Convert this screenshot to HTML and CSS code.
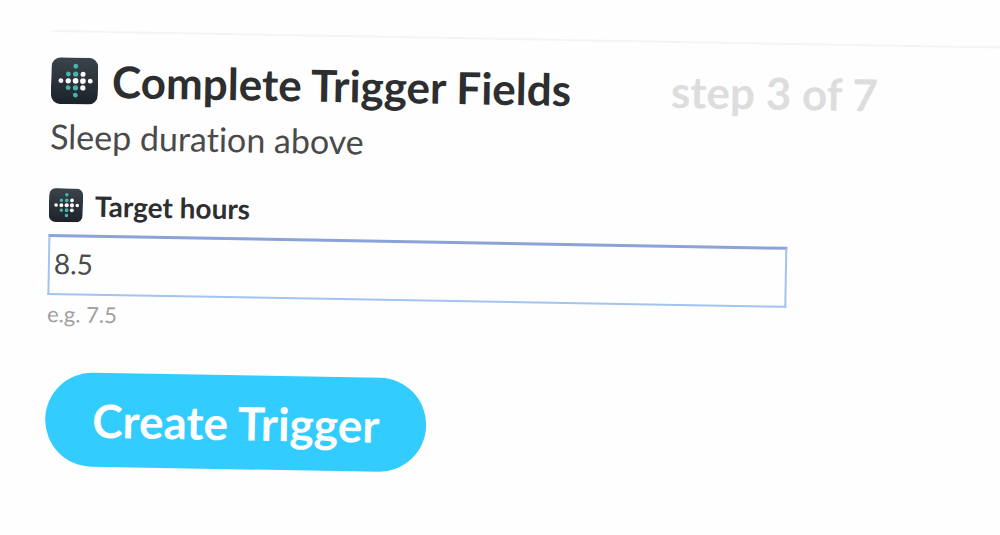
FILE: index.html
```html
<!DOCTYPE html>
<html lang="en">
<head>
    <meta charset="UTF-8">
    <meta name="viewport" content="width=device-width, initial-scale=1.0">
    <title>Complete Trigger Fields</title>
    <link rel="stylesheet" href="styles.css">
</head>
<body>
    <!-- Tracker logo, shared by the heading and the field label -->
    <svg class="sprite" aria-hidden="true">
        <defs>
            <linearGradient id="tile" x1="0" y1="0" x2="0" y2="1">
                <stop offset="0" stop-color="#3b434b"/>
                <stop offset="1" stop-color="#1c2229"/>
            </linearGradient>
        </defs>
        <symbol id="logo" viewBox="0 0 48 48">
            <rect width="48" height="48" rx="10" fill="url(#tile)"/>
            <g fill="#45b5aa">
                <circle cx="25" cy="9" r="2.5"/>
                <circle cx="17.5" cy="17" r="2.5"/>
                <circle cx="25" cy="17" r="2.7"/>
                <circle cx="17.5" cy="31" r="2.5"/>
                <circle cx="25" cy="31" r="2.7"/>
                <circle cx="25" cy="38.5" r="2.5"/>
            </g>
            <g fill="#fff">
                <circle cx="32.5" cy="17" r="2.6"/>
                <circle cx="10" cy="24" r="2.5"/>
                <circle cx="17.5" cy="24" r="2.7"/>
                <circle cx="25" cy="24" r="2.9"/>
                <circle cx="32.5" cy="24" r="2.9"/>
                <circle cx="40" cy="24" r="2.5"/>
                <circle cx="32.5" cy="31" r="2.7"/>
            </g>
        </symbol>
    </svg>

    <main class="step">
        <div class="step-header">
            <svg class="logo" aria-hidden="true"><use href="#logo"/></svg>
            <h1>Complete Trigger Fields</h1>
            <span class="step-count">step 3 of 7</span>
        </div>
        <p class="subtitle">Sleep duration above</p>

        <form id="trigger-form">
            <div class="form-group">
                <label for="hours">
                    <svg class="logo-small" aria-hidden="true"><use href="#logo"/></svg>
                    Target hours
                </label>
                <input type="text" id="hours" name="hours" value="8.5" aria-describedby="hours-hint">
                <small id="hours-hint">e.g. 7.5</small>
            </div>
            <button type="submit">Create Trigger</button>
        </form>
    </main>
</body>
</html>
```
FILE: styles.css
```css
* {
    box-sizing: border-box;
}
body {
    margin: 0;
    padding: 30px 0 40px 52px;
    min-height: 100vh;
    background-color: #fefefe;
    color: #2d2e30;
    font-family: Lato, "Liberation Sans", sans-serif;
    font-variant-ligatures: none;
    overflow: hidden;
}
.sprite {
    display: block;
    width: 0;
    height: 0;
}
.step {
    border-top: 2px solid #f5f5f5;
    transform: rotate(1deg);
    transform-origin: top left;
}
.step-header {
    display: flex;
    align-items: center;
    margin-top: 20px;
    height: 56px;
}
.logo {
    flex: none;
    width: 47px;
    height: 47px;
}
h1 {
    margin: 0 0 0 14px;
    font-size: 44px;
    line-height: 56px;
    white-space: nowrap;
}
.step-count {
    margin-left: 100px;
    color: #dddddd;
    font-size: 44px;
    font-weight: bold;
    line-height: 56px;
    white-space: nowrap;
}
.subtitle {
    margin: 8px 0 0;
    color: #4a4a4a;
    font-size: 34px;
    line-height: 40px;
}
.form-group {
    margin-top: 32px;
    width: 78%;
}
label {
    display: flex;
    align-items: center;
    gap: 12px;
    font-size: 28px;
    font-weight: bold;
    line-height: 34px;
}
.logo-small {
    flex: none;
    width: 34px;
    height: 34px;
}
input[type="text"] {
    display: block;
    width: 100%;
    height: 61px;
    margin-top: 12px;
    padding: 0 4px 4px;
    border: 2px solid #a3c3f0;
    border-top: 3px solid #8aa3d8;
    background-color: #fefefe;
    color: #4a4a4a;
    font-family: inherit;
    font-size: 28px;
    outline: none;
}
small {
    display: block;
    margin-top: 4px;
    color: #a0a0a0;
    font-size: 22px;
    line-height: 30px;
}
button {
    margin-top: 43px;
    padding: 0 47px;
    height: 94px;
    border: none;
    border-radius: 47px;
    background-color: #33ccff;
    color: #ffffff;
    font-family: inherit;
    font-size: 46px;
    font-weight: bold;
    cursor: pointer;
}
```
